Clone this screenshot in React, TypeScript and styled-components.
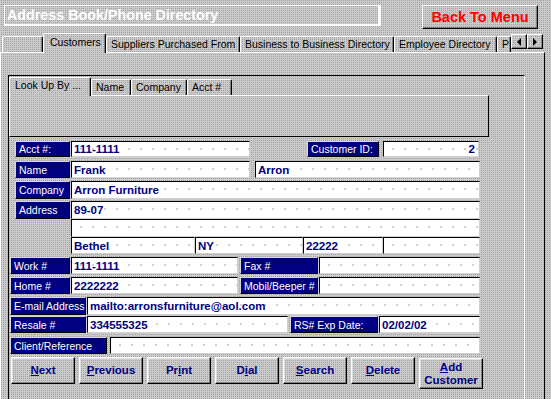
import styled, { createGlobalStyle } from 'styled-components';

const GlobalStyle = createGlobalStyle`
  * { box-sizing: border-box; }
  body { margin: 0; background: #c0c0c0; }
`;

const dither = `
  background-color: #cbcbcb;
  background-image: conic-gradient(#a3a3a3 25%, transparent 0);
  background-size: 2px 2px;
`;

const raised = `
  border-style: solid;
  border-width: 1px;
  border-color: #ffffff #000000 #000000 #ffffff;
  box-shadow: inset -1px -1px 0 #808080;
`;

function App() {
  return (
    <>
      <GlobalStyle />
      <Screen>
        <Header>
          <TitleBox>Address Book/Phone Directory</TitleBox>
          <BackButton>Back To Menu</BackButton>
        </Header>

        <TabStrip>
          <Tab $w={41} />
          <Tab $w={63} $active>Customers</Tab>
          <Tab $w={134}>Suppliers Purchased From</Tab>
          <Tab $w={154}>Business to Business Directory</Tab>
          <Tab $w={103}>Employee Directory</Tab>
          <Tab $w={14}>P</Tab>
          <ScrollButton>
            <svg width="5" height="8" viewBox="0 0 5 8">
              <polygon points="4,0 4,8 0,4" fill="#000" />
            </svg>
          </ScrollButton>
          <ScrollButton>
            <svg width="5" height="8" viewBox="0 0 5 8">
              <polygon points="0,0 0,8 4,4" fill="#000" />
            </svg>
          </ScrollButton>
        </TabStrip>

        <TabPage>
          <SubForm>
            <LookupTabs>
              <LookupTab $w={82} $active>Look Up By ...</LookupTab>
              <LookupTab $w={40}>Name</LookupTab>
              <LookupTab $w={56}>Company</LookupTab>
              <LookupTab $w={45}>Acct #</LookupTab>
            </LookupTabs>
            <LookupPage />

            <FormRow $mt={4} $h={16}>
              <Label $ml={6} $w={55}>Acct #:</Label>
              <Field $ml={1} $w={179}>111-1111</Field>
              <Label $ml={57} $w={72}>Customer ID:</Label>
              <Field $ml={4} $w={96} $right>2</Field>
            </FormRow>

            <FormRow $mt={4} $h={17}>
              <Label $ml={6} $w={55}>Name</Label>
              <Field $ml={1} $w={179}>Frank</Field>
              <Field $ml={5} $w={225}>Arron</Field>
            </FormRow>

            <FormRow $mt={3} $h={18}>
              <Label $ml={6} $w={55}>Company</Label>
              <Field $ml={1} $w={409}>Arron Furniture</Field>
            </FormRow>

            <FormRow $mt={2} $h={18}>
              <Label $ml={6} $w={55}>Address</Label>
              <Field $ml={1} $w={409}>89-07</Field>
            </FormRow>

            <FormRow $mt={0} $h={18}>
              <Field $ml={62} $w={409} />
            </FormRow>

            <FormRow $mt={0} $h={17}>
              <Field $ml={62} $w={124}>Bethel</Field>
              <Field $w={108}>NY</Field>
              <Field $w={80}>22222</Field>
              <Field $w={97} />
            </FormRow>

            <FormRow $mt={3} $h={17}>
              <Label $ml={1} $w={60}>Work #</Label>
              <Field $ml={1} $w={167}>111-1111</Field>
              <Label $ml={2} $w={78}>Fax #</Label>
              <Field $ml={1} $w={161} />
            </FormRow>

            <FormRow $mt={3} $h={17}>
              <Label $ml={1} $w={60}>Home #</Label>
              <Field $ml={1} $w={167}>2222222</Field>
              <Label $ml={2} $w={78}>Mobil/Beeper #</Label>
              <Field $ml={1} $w={161} />
            </FormRow>

            <FormRow $mt={3} $h={18}>
              <Label $ml={1} $w={76}>E-mail Address</Label>
              <Field $ml={1} $w={393}>mailto:arronsfurniture@aol.com</Field>
            </FormRow>

            <FormRow $mt={1} $h={17}>
              <Label $ml={1} $w={76}>Resale #</Label>
              <Field $ml={1} $w={201}>334555325</Field>
              <Label $ml={2} $w={88}>RS# Exp Date:</Label>
              <Field $ml={1} $w={101}>02/02/02</Field>
            </FormRow>

            <FormRow $mt={4} $h={17}>
              <Label $ml={1} $w={97}>Client/Reference</Label>
              <Field $ml={3} $w={370} />
            </FormRow>

            <ButtonRow>
              <ActionButton><span><u>N</u>ext</span></ActionButton>
              <ActionButton><span><u>P</u>revious</span></ActionButton>
              <ActionButton><span>Pr<u>i</u>nt</span></ActionButton>
              <ActionButton><span>D<u>i</u>al</span></ActionButton>
              <ActionButton><span><u>S</u>earch</span></ActionButton>
              <ActionButton><span><u>D</u>elete</span></ActionButton>
              <ActionButton $tall>
                <span>
                  <u>A</u>dd
                  <br />
                  Customer
                </span>
              </ActionButton>
            </ButtonRow>
          </SubForm>
        </TabPage>
      </Screen>
    </>
  );
}

const Screen = styled.div`
  width: 551px;
  height: 399px;
  overflow: hidden;
  font-family: 'Liberation Sans', Arial, sans-serif;
  ${dither}
`;

const Header = styled.div`
  display: flex;
  align-items: flex-start;
  height: 31px;
  padding: 5px 0 0 4px;
`;

const TitleBox = styled.div`
  width: 377px;
  height: 21px;
  border: 1px solid #ffffff;
  border-right-width: 3px;
  border-bottom-width: 2px;
  padding-left: 2px;
  color: #ffffff;
  font-weight: bold;
  font-size: 14.3px;
  line-height: 18px;
  white-space: nowrap;
`;

const BackButton = styled.div`
  margin-left: 41px;
  width: 116px;
  height: 24px;
  ${raised}
  display: flex;
  align-items: center;
  justify-content: center;
  color: #ff0000;
  font-weight: bold;
  font-size: 14.5px;
`;

const TabStrip = styled.div`
  display: flex;
  align-items: flex-end;
  height: 21px;
  padding-left: 2px;
`;

const Tab = styled.div<{ $w: number; $active?: boolean }>`
  width: ${(p) => p.$w}px;
  height: ${(p) => (p.$active ? 20 : 16)}px;
  margin-bottom: ${(p) => (p.$active ? -1 : 0)}px;
  position: relative;
  z-index: ${(p) => (p.$active ? 1 : 0)};
  ${dither}
  border-top: 1px solid #ffffff;
  border-left: 1px solid #ffffff;
  border-right: 1px solid #000000;
  border-radius: 2px 2px 0 0;
  box-shadow: inset -1px 0 0 #808080;
  color: #000000;
  font-size: 10.5px;
  line-height: ${(p) => (p.$active ? 16 : 14)}px;
  padding-left: ${(p) => (p.$active ? 6 : 4)}px;
  white-space: nowrap;
  overflow: hidden;
`;

const ScrollButton = styled.div`
  width: 16px;
  height: 15px;
  margin-bottom: 3px;
  ${raised}
  display: flex;
  align-items: center;
  justify-content: center;
`;

const TabPage = styled.div`
  width: 545px;
  height: 360px;
  border-top: 1px solid #ffffff;
  border-left: 1px solid #ffffff;
  border-right: 1px solid #000000;
  padding: 22px 0 0 7px;
`;

const SubForm = styled.div`
  width: 517px;
  height: 340px;
  border-top: 1px solid #000000;
  border-left: 1px solid #000000;
  border-right: 1px solid #ffffff;
`;

const LookupTabs = styled.div`
  display: flex;
  align-items: flex-end;
  height: 19px;
`;

const LookupTab = styled.div<{ $w: number; $active?: boolean }>`
  width: ${(p) => p.$w}px;
  height: ${(p) => (p.$active ? 19 : 16)}px;
  margin-bottom: ${(p) => (p.$active ? -1 : 0)}px;
  position: relative;
  z-index: ${(p) => (p.$active ? 1 : 0)};
  ${dither}
  border-top: 1px solid #ffffff;
  border-left: 1px solid #ffffff;
  border-right: 1px solid #000000;
  border-radius: 2px 2px 0 0;
  box-shadow: inset -1px 0 0 #808080;
  color: #000000;
  font-size: 10.5px;
  line-height: ${(p) => (p.$active ? 15 : 14)}px;
  padding-left: ${(p) => (p.$active ? 5 : 4)}px;
  white-space: nowrap;
`;

const LookupPage = styled.div`
  width: 480px;
  height: 42px;
  border-top: 1px solid #ffffff;
  border-left: 1px solid #ffffff;
  border-right: 1px solid #000000;
  border-bottom: 1px solid #000000;
`;

const FormRow = styled.div<{ $mt: number; $h: number }>`
  display: flex;
  margin-top: ${(p) => p.$mt}px;
  height: ${(p) => p.$h}px;
`;

const Label = styled.div<{ $ml?: number; $w: number }>`
  margin-left: ${(p) => p.$ml ?? 0}px;
  width: ${(p) => p.$w}px;
  height: 100%;
  background: #000080;
  border: 1px solid;
  border-color: #d8d8d8 #000000 #000000 #d8d8d8;
  color: #ffffff;
  font-size: 10.5px;
  padding-left: 3px;
  display: flex;
  align-items: center;
  white-space: nowrap;
  overflow: hidden;
`;

const Field = styled.div<{ $ml?: number; $w: number; $right?: boolean }>`
  margin-left: ${(p) => p.$ml ?? 0}px;
  width: ${(p) => p.$w}px;
  height: 100%;
  background-color: #ffffff;
  background-image: radial-gradient(circle, #b8b8b8 0.6px, transparent 0.9px);
  background-size: 12px 12px;
  background-position: 3px 1px;
  border: 1px solid;
  border-color: #000000 #d0d0d0 #d0d0d0 #000000;
  color: #000080;
  font-weight: bold;
  font-size: 11.5px;
  padding: 0 3px 0 2px;
  display: flex;
  align-items: center;
  justify-content: ${(p) => (p.$right ? 'flex-end' : 'flex-start')};
  white-space: nowrap;
  overflow: hidden;
`;

const ButtonRow = styled.div`
  display: flex;
  align-items: flex-start;
  gap: 4px;
  margin: 3px 0 0 2px;
`;

const ActionButton = styled.div<{ $tall?: boolean }>`
  width: 64px;
  height: ${(p) => (p.$tall ? 31 : 27)}px;
  margin-top: ${(p) => (p.$tall ? 1 : 0)}px;
  ${raised}
  box-shadow: inset -1px -1px 0 #808080, inset 1px 1px 0 #dfdfdf;
  display: flex;
  align-items: center;
  justify-content: center;
  text-align: center;
  color: #000080;
  font-weight: bold;
  font-size: 11.5px;
  line-height: 13px;
`;

export default App;
